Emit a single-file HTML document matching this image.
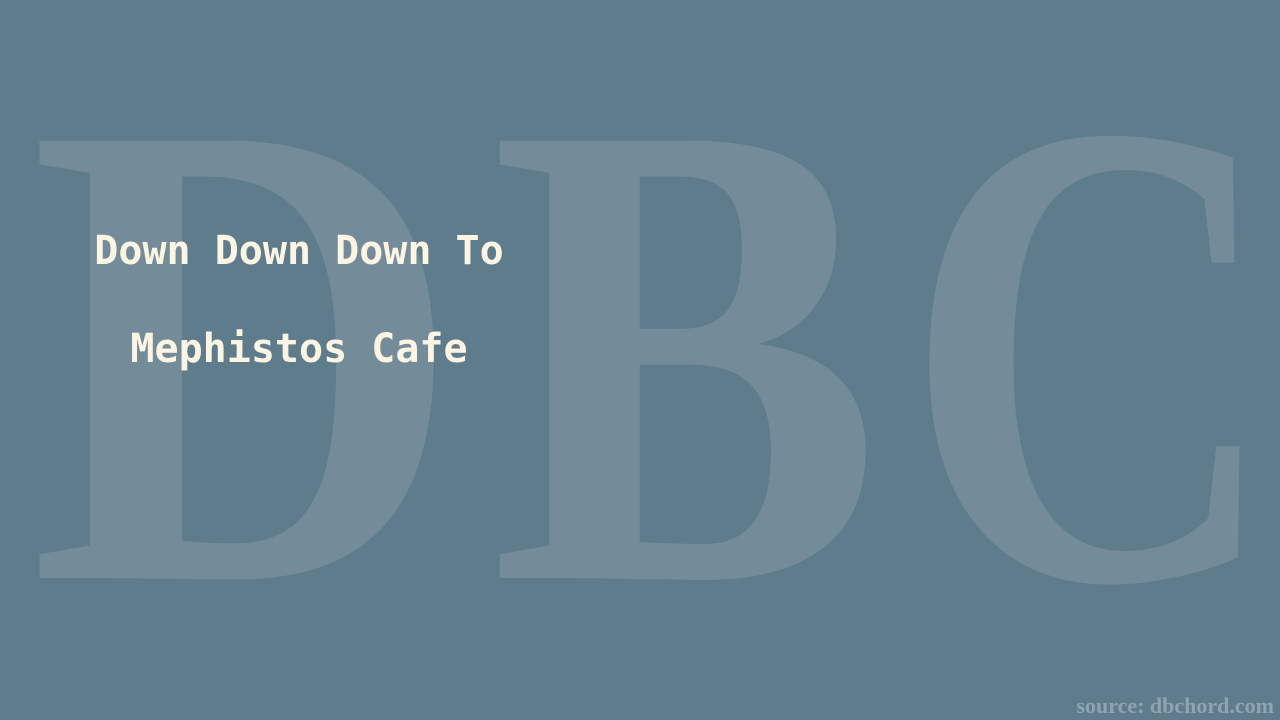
<!DOCTYPE html>
<html><head><meta charset="utf-8"><style>
html,body{margin:0;padding:0}
body{width:1280px;height:720px;background:#5f7c8c;overflow:hidden;position:relative}
svg{position:absolute;left:0;top:0}
.t{position:absolute;left:0;width:598px;text-align:center;font-family:"DejaVu Sans Mono","Liberation Mono",monospace;font-weight:bold;font-size:40px;color:#fdf5e4;white-space:pre;line-height:1}
.s{position:absolute;right:6px;top:695px;font-family:"Liberation Serif",serif;font-weight:bold;font-size:22px;color:#8fa4b0;line-height:1}
</style></head><body>
<svg width="1280" height="720">
<g font-family="Liberation Serif, serif" font-weight="bold" font-size="668" fill="#748c99">
<text x="29" y="578" textLength="434" lengthAdjust="spacingAndGlyphs">D</text>
<text x="490" y="578" textLength="392" lengthAdjust="spacingAndGlyphs">B</text>
<text x="904" y="578" textLength="375" lengthAdjust="spacingAndGlyphs">C</text>
</g>
</svg>
<div class="t" style="top:231px">Down Down Down To</div>
<div class="t" style="top:329px">Mephistos Cafe</div>
<div class="s">source: dbchord.com</div>
</body></html>
